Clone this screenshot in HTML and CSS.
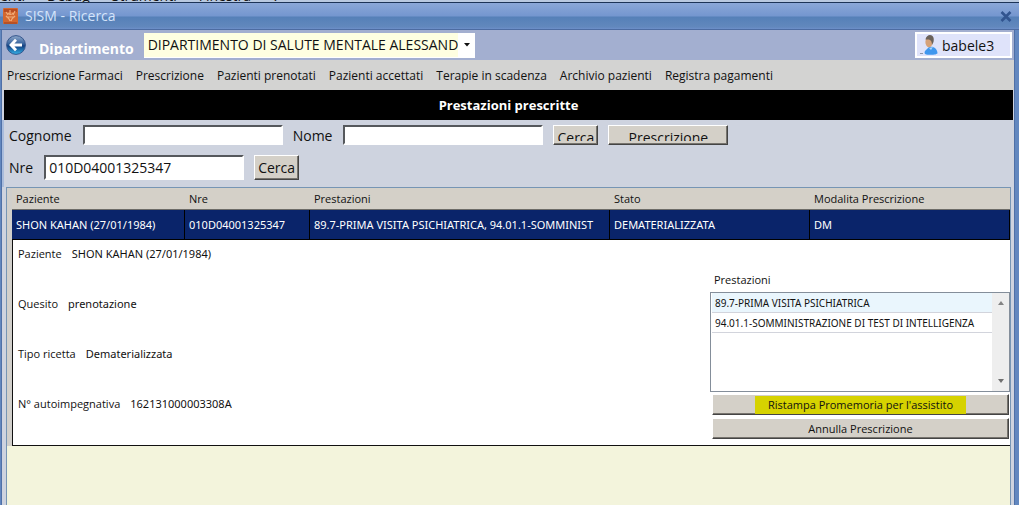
FILE: index.html
```html
<!DOCTYPE html>
<html lang="it">
<head>
<meta charset="utf-8">
<title>SISM - Ricerca</title>
<link rel="stylesheet" href="styles.css">
</head>
<body>
<div class="host-menu" aria-hidden="true"><span>enti</span><span>Debug</span><span>Strumenti</span><span>Finestra</span><span>?</span></div>
<div class="window">
  <header class="titlebar">
    <svg class="app-icon" viewBox="0 0 16 17" aria-hidden="true">
      <rect width="15" height="16" rx="1" fill="#d3672f"/>
      <path d="M1 1h13v3H1z" fill="#b84c22"/>
      <path d="M3 4l2 3M7 2v5M12 3l-2 4M3 8c2 2 3 2 4 5M12 8c-2 2-3 2-4 5M5 5c1 2 4 2 5 0M5 9h5" fill="none" stroke="#f0ab78" stroke-width="1.200"/>
      <path d="M1 15h13" stroke="#9c3d1c"/>
    </svg>
    <h1 class="title">SISM - Ricerca</h1>
    <button class="close" type="button" aria-label="Chiudi">
      <svg viewBox="0 0 12 11" aria-hidden="true"><path d="M1.500 1l9 9M10.500 1l-9 9" stroke="#31548f" stroke-width="2.600"/></svg>
    </button>
  </header>
  <main class="content">
    <div class="department">
      <button class="back" type="button" aria-label="Indietro">
        <svg viewBox="0 0 20 20" aria-hidden="true">
          <defs>
            <linearGradient id="ball" x1="0" y1="0" x2="0" y2="1">
              <stop offset="0" stop-color="#8fa9cb"/><stop offset=".45" stop-color="#35619b"/>
              <stop offset=".55" stop-color="#123f80"/><stop offset="1" stop-color="#35b4ea"/>
            </linearGradient>
          </defs>
          <circle cx="10" cy="10" r="9.400" fill="url(#ball)" stroke="#34558c"/>
          <path d="M10 4.800L5 10l5 5.200M5.500 10H16" fill="none" stroke="#fff" stroke-width="2.800"/>
        </svg>
      </button>
      <label class="department-label" for="dept">Dipartimento</label>
      <div class="department-pick">
        <select id="dept"><option>DIPARTIMENTO DI SALUTE MENTALE ALESSANDRIA</option></select>
        <svg class="pick-arrow" viewBox="0 0 6 4" aria-hidden="true"><path d="M0 0h6L3 3.500z" fill="#111"/></svg>
      </div>
      <div class="user">
        <svg viewBox="0 0 18 20" aria-hidden="true">
          <path d="M5 19c-1-2 0-3 1-4l3-3c5-1 8 2 8.500 6 0 2-9 2.500-12.500 1z" fill="#3f97ee"/>
          <path d="M9 13l2 2 2-3z" fill="#a9d4fb"/>
          <ellipse cx="9" cy="7" rx="3.600" ry="5.200" fill="#d6a27a"/>
          <path d="M5.500 4.500C6 1.500 8 0 10 0c3 0 4.500 3 3.500 7L12 10c0-3-1-5-3-5.500z" fill="#6b625a"/>
          <path d="M0 18.500h3" stroke="#8a94a8"/>
        </svg>
        <span>babele3</span>
      </div>
    </div>
    <nav class="menu">
      <a href="#">Prescrizione Farmaci</a><a href="#">Prescrizione</a><a href="#">Pazienti prenotati</a><a href="#">Pazienti accettati</a><a href="#">Terapie in scadenza</a><a href="#">Archivio pazienti</a><a href="#">Registra pagamenti</a>
    </nav>
    <h2 class="heading">Prestazioni prescritte</h2>
    <form class="search">
      <div class="search-row">
        <label for="cognome">Cognome</label><input id="cognome" class="field short" type="text">
        <label for="nome">Nome</label><input id="nome" class="field short" type="text">
        <button class="btn short" type="button"><span>Cerca</span></button>
        <button class="btn short wide" type="button"><span>Prescrizione</span></button>
      </div>
      <div class="search-row">
        <label for="nre">Nre</label><input id="nre" class="field" type="text" value="010D04001325347">
        <button class="btn" type="button">Cerca</button>
      </div>
    </form>
    <section class="grid">
      <table class="results">
        <colgroup><col class="c-patient"><col class="c-nre"><col class="c-services"><col class="c-state"><col></colgroup>
        <thead><tr><th>Paziente</th><th>Nre</th><th>Prestazioni</th><th>Stato</th><th>Modalita Prescrizione</th></tr></thead>
        <tbody>
          <tr class="selected"><td>SHON KAHAN (27/01/1984)</td><td>010D04001325347</td><td>89.7-PRIMA VISITA PSICHIATRICA, 94.01.1-SOMMINIST</td><td>DEMATERIALIZZATA</td><td>DM</td></tr>
          <tr class="detail-row"><td colspan="5">
            <div class="detail">
              <dl class="facts">
                <div><dt>Paziente</dt><dd>SHON KAHAN (27/01/1984)</dd></div>
                <div><dt>Quesito</dt><dd>prenotazione</dd></div>
                <div><dt>Tipo ricetta</dt><dd>Dematerializzata</dd></div>
                <div><dt>N° autoimpegnativa</dt><dd>162131000003308A</dd></div>
              </dl>
              <div class="services">
                <h3>Prestazioni</h3>
                <div class="listbox">
                  <ul><li class="current">89.7-PRIMA VISITA PSICHIATRICA</li><li>94.01.1-SOMMINISTRAZIONE DI TEST DI INTELLIGENZA</li></ul>
                  <div class="scroll" aria-hidden="true">
                    <svg viewBox="0 0 6 4"><path d="M0 4h6L3 0z" fill="#848484"/></svg>
                    <svg viewBox="0 0 6 4"><path d="M0 0h6L3 4z" fill="#707070"/></svg>
                  </div>
                </div>
                <button class="btn action" type="button"><mark>Ristampa Promemoria per l'assistito</mark></button>
                <button class="btn action" type="button">Annulla Prescrizione</button>
              </div>
            </div>
          </td></tr>
        </tbody>
      </table>
    </section>
  </main>
</div>
</body>
</html>
```
FILE: styles.css
```css
* { box-sizing: border-box; }
body {
  margin: 0;
  min-height: 100vh;
  display: flex;
  flex-direction: column;
  font-family: "Open Sans", "Noto Sans", sans-serif;
  font-size: 11px;
  color: #111;
}
h1, h2, h3, dl, dd, ul { margin: 0; padding: 0; font-weight: normal; }
button, input, select { font: inherit; color: inherit; }

/* Lower edge of the host application's menu */
.host-menu {
  display: flex;
  align-items: flex-end;
  gap: 22px;
  height: 3px;
  overflow: hidden;
  background: #b9c9e0;
  border-bottom: 1px solid #1d3457;
  font-size: 14px;
  line-height: 12px;
}
.window {
  flex: 1;
  display: flex;
  flex-direction: column;
  background: #6287bf;
  padding-right: 4px;
}
.titlebar {
  display: flex;
  align-items: center;
  height: 27px;
  padding: 0 3px;
  margin-right: -4px;
  background: linear-gradient(#8ba8d8, #7496cf 13px, #5580b8 14px, #6288bd 24px, #6d8fca);
  border-bottom: 1px solid #4d6ca2;
}
.app-icon { width: 16px; height: 17px; }
.title { flex: 1; margin-left: 6px; font-size: 14px; line-height: 20px; color: #d4e4fa; }
.close { border: 0; background: none; padding: 0; margin-right: 4px; display: flex; }
.close svg { width: 12px; height: 11px; }

.content {
  flex: 1;
  display: flex;
  flex-direction: column;
  margin-left: 1px;
  border-left: 1px solid #4f70a7;
  border-right: 1px solid #4f70a7;
  background: #ced3df;
}
.department {
  display: flex;
  align-items: center;
  height: 30px;
  padding: 0 2px 0 4px;
  background: #a3afd0;
}
.back { border: 0; background: none; padding: 0; display: flex; }
.back svg { width: 20px; height: 20px; }
.department-label {
  margin: 4px 10px 0 13px;
  height: 15px;
  overflow: hidden;
  font-size: 14px;
  line-height: 18px;
  font-weight: bold;
  color: #fff;
}
.department-pick { position: relative; width: 331px; }
.department-pick select {
  appearance: none;
  display: block;
  width: 100%;
  height: 25px;
  padding: 0 0 0 4px;
  border: 0 solid #fff;
  border-right-width: 17px;
  border-bottom-width: 1px;
  border-radius: 0;
  background: #ffffe1;
  font-size: 14px;
}
.pick-arrow { position: absolute; right: 5px; top: 10px; width: 6px; height: 4px; pointer-events: none; }
.user {
  display: flex;
  align-items: center;
  gap: 4px;
  width: 97px;
  height: 26px;
  margin-left: auto;
  padding-left: 3px;
  border: 2px solid #fff;
  background: #dfe3fa;
  font-size: 14px;
}
.user svg { width: 18px; height: 20px; }

.menu {
  display: flex;
  align-items: center;
  gap: 13px;
  height: 30px;
  padding: 0 5px;
  background: #d3d3d2;
  font-size: 12px;
  white-space: nowrap;
}
.menu a { color: inherit; text-decoration: none; }
.heading {
  margin: 0 1px 0 2px;
  background: #000;
  color: #fff;
  font-size: 13px;
  font-weight: bold;
  line-height: 30px;
  text-align: center;
}

.search { padding: 4px 5px 6px; font-size: 14px; border-left: 2px solid #a9bcdc; }
.search-row { display: flex; align-items: center; height: 22px; }
.search-row + .search-row { margin-top: 8px; height: 27px; }
.search-row label { margin-right: 11px; }
.field {
  width: 200px;
  height: 25px;
  margin-right: 10px;
  padding: 0 3px;
  border: 2px solid;
  border-color: #55585c #fff #fff #55585c;
  background: #fff;
}
.field.short { height: 20px; }
.btn {
  height: 25px;
  padding: 0 3px;
  border: 1px solid;
  border-color: #fff #444 #444 #fff;
  box-shadow: inset -1px -1px #77746e;
  background: #d4d0c8;
  border-radius: 0;
  line-height: 20px;
}
.btn.short { display: flex; justify-content: center; height: 20px; margin-right: 10px; overflow: hidden; }
.btn.short span { height: 15px; line-height: 23px; overflow: hidden; }
.btn.wide { width: 120px; }

.grid {
  flex: 1;
  margin: 0 3px 0 4px;
  border: 1px solid #7695b4;
  border-bottom: 0;
  background: #f3f4dc;
}
.results { width: 100%; border-collapse: separate; border-spacing: 0; table-layout: fixed; border-left: 5px solid #d1cfcb; }
.c-patient { width: 173px; }
.c-nre { width: 125px; }
.c-services { width: 300px; }
.c-state { width: 200px; }
.results th {
  height: 22px;
  padding: 0 4px;
  background: #d4d0c8;
  border-bottom: 1px solid #6d6c68;
  font-weight: normal;
  text-align: left;
}
.selected td {
  height: 30px;
  padding: 0 0 0 4px;
  background: #0a246a;
  border-right: 1px solid #000;
  border-bottom: 1px solid #000;
  color: #fff;
  font-family: "Noto Sans", sans-serif;
  white-space: nowrap;
  overflow: hidden;
}
.detail-row > td { padding: 0; background: #fff; border: solid #111; border-width: 0 0 1px 1px; }
.detail { display: flex; justify-content: space-between; }
.facts { padding: 0 5px; }
.facts div { display: flex; gap: 10px; height: 50px; line-height: 28px; }
.facts dd { font-family: "Noto Sans", sans-serif; }
.services { display: flex; flex-direction: column; width: 300px; padding: 30px 0 5px; }
.services h3 { padding-left: 4px; font-size: 11px; line-height: 20px; }
.listbox { display: flex; height: 100px; margin-top: 2px; border: 1px solid #848e9a; }
.listbox ul { flex: 1; padding-left: 1px; list-style: none; font-family: "Noto Sans", sans-serif; font-size: 10px; }
.listbox li { height: 20px; padding-left: 3px; line-height: 20px; border-bottom: 1px solid #d2d4dc; white-space: nowrap; }
.listbox .current { background: #eaf6fd; }
.scroll { display: flex; flex-direction: column; align-items: center; justify-content: space-between; width: 17px; padding: 8px 0; background: #eeeeee; }
.scroll svg { width: 6px; height: 4px; }
.btn.action { height: 21px; margin: 2px 1px 1px 2px; padding: 0; line-height: 18px; }
.action mark { display: inline-block; padding: 0 13px; background: #d6d200; color: inherit; }
```
